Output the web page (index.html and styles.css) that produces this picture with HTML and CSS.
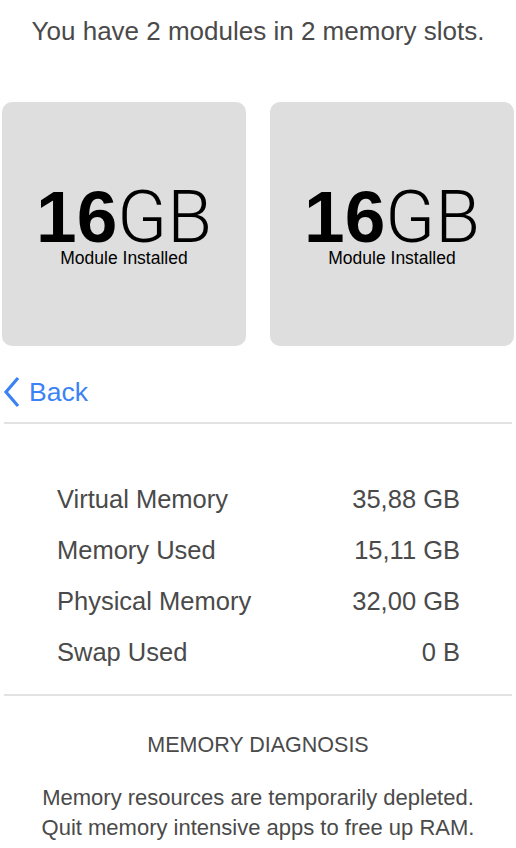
FILE: index.html
```html
<!DOCTYPE html>
<html lang="en">
  <head>
    <meta charset="UTF-8" />
    <meta name="viewport" content="width=device-width, initial-scale=1.0" />
    <title>Memory</title>
    <link rel="stylesheet" href="styles.css">
  </head>
  <body>
    <div class="page">
      <p class="title">You have 2 modules in 2 memory slots.</p>

      <!-- Memory Slots -->
      <div class="slots">
        <div class="slot">
          <div class="size"><b>16</b><span>GB</span></div>
          <div class="label">Module Installed</div>
        </div>
        <div class="slot">
          <div class="size"><b>16</b><span>GB</span></div>
          <div class="label">Module Installed</div>
        </div>
      </div>

      <!-- Back -->
      <a class="back" href="#">
        <svg width="18" height="32" viewBox="0 0 18 32">
          <path d="M15 2 L3 16 L15 30" fill="none" stroke="#3b82f6" stroke-width="3.2" />
        </svg>
        <span>Back</span>
      </a>

      <div class="divider"></div>

      <!-- Stats -->
      <div class="stats">
        <div class="row"><span>Virtual Memory</span><span class="value">35,88 GB</span></div>
        <div class="row"><span>Memory Used</span><span class="value">15,11 GB</span></div>
        <div class="row"><span>Physical Memory</span><span class="value">32,00 GB</span></div>
        <div class="row"><span>Swap Used</span><span class="value">0 B</span></div>
      </div>

      <div class="divider bottom"></div>

      <!-- Diagnosis -->
      <div class="diagnosis">
        <h2>MEMORY DIAGNOSIS</h2>
        <p>Memory resources are temporarily depleted.<br />Quit memory intensive apps to free up RAM.</p>
      </div>
    </div>
  </body>
</html>
```

FILE: styles.css
```css
body {
  font-family: "Liberation Sans", Arial, sans-serif;
  margin: 0;
  padding: 0;
  background: #fff;
  color: #4a4a4a;
}
.page {
  width: 516px;
}
.title {
  margin: 0;
  padding-top: 16px;
  font-size: 26px;
  line-height: 30px;
  text-align: center;
}
.slots {
  display: grid;
  grid-template-columns: 244px 244px;
  gap: 24px;
  padding: 0 2px;
  margin-top: 56px;
}
.slot {
  height: 244px;
  background: #dedede;
  border-radius: 10px;
  display: flex;
  flex-direction: column;
  align-items: center;
  justify-content: center;
  color: #000;
}
.size {
  font-size: 73px;
  line-height: 60px;
  margin-top: 7px;
}
.size b {
  font-weight: bold;
}
.size span {
  font-family: Roboto, "Liberation Sans", sans-serif;
  font-weight: 300;
}
.label {
  font-size: 17.5px;
  line-height: 20px;
  margin-top: 1px;
}
.back {
  display: flex;
  align-items: center;
  gap: 8px;
  margin-top: 30px;
  padding-left: 3px;
  color: #3b82f6;
  text-decoration: none;
  font-size: 26.5px;
  line-height: 32px;
}
.divider {
  height: 2px;
  background: #e2e2e2;
  margin: 14px 4px 0;
}
.divider.bottom {
  margin-top: 16px;
}
.stats {
  padding: 50px 56px 0 57px;
}
.row {
  display: flex;
  justify-content: space-between;
  font-size: 25.5px;
  line-height: 51px;
}
.diagnosis {
  text-align: center;
}
.diagnosis h2 {
  margin: 36px 0 0;
  font-size: 21.5px;
  font-weight: normal;
  line-height: 26px;
}
.diagnosis p {
  margin: 25px 0 0;
  font-size: 22px;
  line-height: 30px;
}
```
